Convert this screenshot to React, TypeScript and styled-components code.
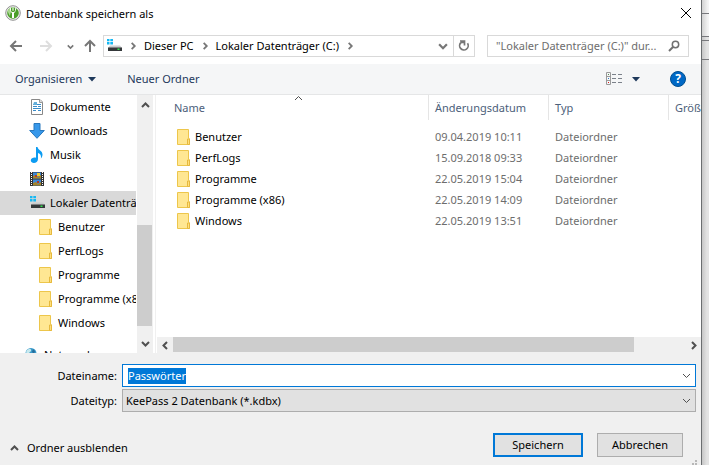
import React, { useEffect, useRef } from "react";
import styled, { createGlobalStyle } from "styled-components";

const GlobalStyle = createGlobalStyle`
  * { box-sizing: border-box; }
  body { margin: 0; background: #e3e3e3; }
  body, button, input, select { font: 11px/16px "Noto Sans", "Open Sans", sans-serif; color: #000; }
  svg { display: block; flex: none; }
`;

const Desktop = styled.div`
  display: flex;
  height: 100vh;
  min-height: 440px;
  overflow: hidden;
`;
const Dialog = styled.main`
  position: relative;
  flex: 1;
  min-width: 0;
  display: flex;
  flex-direction: column;
  background: #fff;
  border-right: 1px solid #6b6e70;
`;
const Backdrop = styled.div`
  width: 7px;
  display: flex;
  flex-direction: column;
  background: linear-gradient(90deg, #c6c6c6, #e3e3e3 5px);
`;
const BackdropStrip = styled.div<{ $height: number; $light?: boolean }>`
  height: ${(p) => p.$height}px;
  border-bottom: 1px solid #77787c;
  background: ${(p) => (p.$light ? "linear-gradient(90deg, #d2d2d2, #f4f4f4 6px)" : "transparent")};
`;
const TitleBar = styled.header`
  display: flex;
  align-items: center;
  height: 28px;
  padding: 0 7px 2px 5px;
  gap: 5px;
`;
const Title = styled.h1`
  flex: 1;
  margin: 0;
  padding-top: 2px;
  font-size: 11px;
  font-weight: 400;
`;
const IconButton = styled.button<{ $width?: number }>`
  display: flex;
  align-items: center;
  justify-content: center;
  width: ${(p) => p.$width ?? 16}px;
  height: 20px;
  padding: 0;
  border: 0;
  background: none;
  flex: none;
`;
const NavBar = styled.nav`
  display: flex;
  align-items: center;
  height: 36px;
  padding: 0 12px 0 8px;
`;
const History = styled.div`
  display: flex;
  align-items: center;
  width: 95px;
`;
const AddressBar = styled.div`
  flex: 1;
  min-width: 0;
  display: flex;
  align-items: center;
  height: 22px;
  border: 1px solid #d9d9d9;
  padding-left: 2px;
`;
const Crumb = styled.button`
  padding: 0;
  border: 0;
  background: none;
  white-space: nowrap;
`;
const CrumbChevron = styled.span`
  display: flex;
  justify-content: center;
  width: 22px;
`;
const Spacer = styled.span`
  flex: 1;
`;
const RefreshCell = styled.div`
  border-left: 1px solid #d9d9d9;
`;
const SearchBox = styled.label`
  display: flex;
  align-items: center;
  width: 202px;
  height: 22px;
  margin-left: 12px;
  padding: 0 8px;
  border: 1px solid #d9d9d9;
`;
const SearchInput = styled.input`
  flex: 1;
  min-width: 0;
  padding: 0;
  border: 0;
  outline: 0;
  background: none;
  text-overflow: ellipsis;
  &::placeholder { color: #6d6d6d; opacity: 1; }
`;
const Toolbar = styled.div`
  display: flex;
  align-items: center;
  height: 31px;
  padding: 0 15px;
  background: #f5f6f7;
  border-bottom: 1px solid #e5e6e7;
`;
const ToolButton = styled.button`
  display: flex;
  align-items: center;
  gap: 6px;
  margin-right: 31px;
  padding: 0;
  border: 0;
  background: none;
  color: #1e395b;
`;
const ViewButton = styled(ToolButton)`
  gap: 10px;
  margin-right: 30px;
`;
const Content = styled.div`
  flex: 1;
  min-height: 0;
  display: flex;
`;
const TreePane = styled.aside`
  width: 156px;
  display: flex;
  border-right: 1px solid #f0f0f0;
`;
const Tree = styled.ul`
  flex: 1;
  min-width: 0;
  margin: 0;
  padding: 0;
  list-style: none;
  overflow: hidden;
`;
const TreeItem = styled.li<{ $depth: number; $selected?: boolean; $spaced?: boolean }>`
  display: flex;
  align-items: center;
  gap: 5px;
  height: 24px;
  margin-top: ${(p) => (p.$spaced ? 8 : 0)}px;
  margin-right: 1px;
  padding-left: ${(p) => [23, 29, 37][p.$depth]}px;
  background: ${(p) => (p.$selected ? "#d9d9d9" : "transparent")};
  white-space: nowrap;
  overflow: hidden;
`;
const VerticalBar = styled.div`
  width: 16px;
  margin-right: 2px;
  display: flex;
  flex-direction: column;
  align-items: center;
  background: #f0f0f0;
`;
const VerticalTrack = styled.div`
  flex: 1;
  width: 100%;
  display: flex;
  flex-direction: column;
  justify-content: flex-end;
  padding: 0 1px 7px 0;
`;
const VerticalThumb = styled.div`
  height: 48%;
  background: #cdcdcd;
`;
const FilePane = styled.section`
  flex: 1;
  min-width: 0;
  display: flex;
  flex-direction: column;
`;
const TableArea = styled.div`
  flex: 1;
  min-height: 0;
  overflow: hidden;
`;
const FileTable = styled.table`
  width: 100%;
  table-layout: fixed;
  border-collapse: separate;
  border-spacing: 0;
  tbody::before { content: ""; display: block; height: 6px; }
`;
const HeadCell = styled.th<{ $width?: number; $first?: boolean }>`
  width: ${(p) => (p.$width ? `${p.$width}px` : "auto")};
  height: 25px;
  padding: 1px 0 0 ${(p) => (p.$first ? 18 : 6)}px;
  border-left: ${(p) => (p.$first ? "0" : "1px solid #e5e5e5")};
  color: #4c607a;
  font-weight: 400;
  text-align: left;
  white-space: nowrap;
`;
const HeadLabel = styled.span`
  display: flex;
  justify-content: space-between;
`;
const SortMark = styled.span`
  display: flex;
  align-items: flex-start;
  height: 28px;
  margin: -6px 125px -6px 0;
`;
const Cell = styled.td`
  height: 21px;
  padding: 0 0 0 7px;
  color: #6d6d6d;
`;
const NameCell = styled(Cell)`
  padding-left: 19px;
  color: #000;
`;
const FileName = styled.span`
  display: flex;
  align-items: center;
  gap: 4px;
`;
const HorizontalBar = styled.div`
  display: flex;
  align-items: center;
  height: 16px;
  margin-left: 1px;
  background: #f0f0f0;
`;
const HorizontalTrack = styled.div`
  flex: 1;
  height: 100%;
  padding-bottom: 1px;
`;
const HorizontalThumb = styled.div`
  width: 90%;
  height: 100%;
  background: #cdcdcd;
`;
const Footer = styled.form`
  display: flex;
  flex-direction: column;
  height: 112px;
  padding: 11px 5px 8px 8px;
  background: #f0f0f0;
`;
const Field = styled.div`
  display: flex;
  align-items: center;
  height: 23px;
  margin-bottom: 2px;
`;
const FieldLabel = styled.label`
  width: 114px;
  padding-right: 5px;
  text-align: right;
`;
const Combo = styled.div<{ $active?: boolean }>`
  flex: 1;
  height: 23px;
  display: grid;
  align-items: center;
  border: 1px solid ${(p) => (p.$active ? "#0078d7" : "#adadad")};
  background: ${(p) => (p.$active ? "#fff" : "#e1e1e1")};
  > * { grid-area: 1 / 1; }
  > svg { justify-self: end; margin-right: 4px; pointer-events: none; }
`;
const NameInput = styled.input`
  min-width: 0;
  height: 16px;
  padding: 0 24px 0 5px;
  border: 0;
  outline: 0;
  background: none;
  &::selection { background: #0078d7; color: #fff; }
`;
const TypeSelect = styled.select`
  appearance: none;
  min-width: 0;
  height: 21px;
  padding: 0 24px 0 3px;
  border: 0;
  outline: 0;
  background: none;
`;
const Actions = styled.div`
  display: flex;
  align-items: center;
  gap: 14px;
  margin-top: auto;
  padding-right: 13px;
`;
const FoldButton = styled.button`
  display: flex;
  align-items: center;
  gap: 8px;
  margin-right: auto;
  padding: 6px 0 0 2px;
  border: 0;
  background: none;
`;
const PushButton = styled.button<{ $primary?: boolean }>`
  width: ${(p) => (p.$primary ? 90 : 86)}px;
  height: 24px;
  padding: 0;
  border: ${(p) => (p.$primary ? "2px solid #0078d7" : "1px solid #adadad")};
  background: #e1e1e1;
`;
const ResizeGrip = styled.svg`
  position: absolute;
  right: 2px;
  bottom: 0;
`;

type Direction = "up" | "down" | "left" | "right";
const chevronPaths: Record<Direction, string> = {
  up: "M1 6 L4.5 2.5 L8 6",
  down: "M1 3 L4.5 6.5 L8 3",
  left: "M6 1 L2.5 4.5 L6 8",
  right: "M3 1 L6.5 4.5 L3 8",
};
const Chevron = ({ dir, size = 9, weight = 2, color = "#505050" }: { dir: Direction; size?: number; weight?: number; color?: string }) => (
  <svg width={size} height={size} viewBox="0 0 9 9" fill="none" stroke={color} strokeWidth={weight}>
    <path d={chevronPaths[dir]} />
  </svg>
);

const Arrow = ({ dir, color }: { dir: Direction; color: string }) => (
  <svg width="14" height="14" viewBox="0 0 14 14" fill="none" stroke={color} strokeWidth="2">
    <path
      d={
        dir === "left"
          ? "M13 7H2M7 2L2 7l5 5"
          : dir === "right"
            ? "M1 7h11M7 2l5 5-5 5"
            : "M7 13V2M2 7l5-5 5 5"
      }
    />
  </svg>
);

const KeePassIcon = () => (
  <svg width="16" height="16" viewBox="0 0 16 16">
    <circle cx="8" cy="8" r="7.3" fill="#eee" stroke="#929292" strokeWidth="1" />
    <circle cx="8" cy="8" r="5.8" fill="#4a9e28" />
    <path d="M2.5 6.2A5.8 5.8 0 0 1 6 2.6v4L4.8 11z" fill="#a9d68e" />
    <path d="M4.8 3.5l1 3.5 1.2 1V13h2V8l1.200-1 1-3.500L10 3v3.200L8.700 7H7.300L6 6.200V3z" fill="#fff" />
    <path d="M7.300 2.300h1.400v3.500H7.300z" fill="#d7edcb" />
  </svg>
);
const DriveIcon = () => (
  <svg width="16" height="16" viewBox="0 0 16 16">
    <path d="M1 1h2.500v2.300H1zM4.300 1H7v2.300H4.300zM1 4.100h2.500v2.400H1zM4.300 4.100H7v2.400H4.300z" fill="#16b8f3" />
    <path d="M4 7.500h10l2 2.500H2z" fill="#c9ccce" />
    <path d="M2 9.500h14V13H2z" fill="#34383a" />
    <path d="M11.500 10.500h2v1.500h-2z" fill="#31e34c" />
  </svg>
);
const FolderIcon = () => (
  <svg width="16" height="18" viewBox="0 0 16 18">
    <path d="M2.500 1.500h11v8.500l1 1v5.500h-12z" fill="#ffe793" stroke="#edc64b" />
    <path d="M12.500 16.500v-5.500h2v5.500z" fill="#ffdf7d" stroke="#e6b93e" />
  </svg>
);
const DocumentIcon = () => (
  <svg width="16" height="16" viewBox="0 0 16 16">
    <path d="M2.500.5h8.500l2.500 2.500v12.500h-11z" fill="#fff" stroke="#888" />
    <path d="M10.500.5v3h3" fill="#ddd" stroke="#999" />
    <path d="M4 5.500h3M8 5.500h4M4 7.500h4M9 7.500h3M4 9.500h8M4 11.500h3M9 11.500h3" stroke="#3a8cc9" />
    <path d="M5 3h3v3H4z" fill="#62add9" />
  </svg>
);
const DownloadIcon = () => (
  <svg width="16" height="16" viewBox="0 0 16 16">
    <path d="M5 .5h6v7h4.300L8 15.300.7 7.500H5z" fill="#3798ea" stroke="#2878be" />
  </svg>
);
const MusicIcon = () => (
  <svg width="16" height="16" viewBox="0 0 16 16">
    <path d="M7 0h1.500c.5 3 5 3.500 5 7.500 0 2-1 3.500-1.700 4 .8-3-.8-5-2.800-5.500V12c0 5-7.500 5-7.200 1.200C2 11 5 10 7 10.800z" fill="#0c9cf2" />
  </svg>
);
const VideoIcon = () => (
  <svg width="16" height="16" viewBox="0 0 16 16">
    <path d="M1 1h14v14H1z" fill="#333" />
    <path d="M4 1.500h8v6H4zM4 8.500h8v6H4z" fill="#3c88d8" />
    <path d="M4 5l3-1 2 2 3-2v3.500H4zM4 12l3-1 2 2 3-2v3.500H4z" fill="#a78529" />
    <path d="M8 2h3v3H8z" fill="#ebc936" />
    <path d="M6 4h2v2H6zM8 10h2v2H8z" fill="#b43b22" />
    <path d="M2.500 1v14M13.500 1v14" stroke="#fff" strokeWidth="1" strokeDasharray="1 1" />
  </svg>
);
const NetworkIcon = () => (
  <svg width="16" height="16" viewBox="0 0 16 16">
    <circle cx="8" cy="6.500" r="5.500" fill="#3a9bcb" />
    <path d="M4 3c2-2 5-1 4 1L6 6l1 3-3-2-1-2z" fill="#c7e9ee" />
    <path d="M10 2l2 2-1 3-2-2z" fill="#266d9b" />
  </svg>
);
const RefreshIcon = () => (
  <svg width="12" height="12" viewBox="0 0 12 12" fill="none" stroke="#767676" strokeWidth="1.700">
    <path d="M3 2.500A4.300 4.300 0 1 0 9.500 3.300M3 2.500H7M6.500 5.500V1H2" />
  </svg>
);
const SearchIcon = () => (
  <svg width="12" height="12" viewBox="0 0 12 12" fill="none" stroke="#707070">
    <circle cx="7.500" cy="4.500" r="3.200" strokeWidth="1.500" />
    <path d="M5 7L1 11" strokeWidth="2" />
  </svg>
);
const CloseIcon = () => (
  <svg width="12" height="12" viewBox="0 0 12 12" stroke="#000">
    <path d="M1 1l10 10M11 1L1 11" />
  </svg>
);
const Triangle = () => (
  <svg width="8" height="5" viewBox="0 0 8 5">
    <path d="M0 0h8L4 4.500z" fill="#1e395b" />
  </svg>
);
const ViewIcon = () => (
  <svg width="16" height="14" viewBox="0 0 16 14" fill="none">
    <path d="M.5.5h4v12h-4zM.5 4.500h4M.5 8.500h4" stroke="#9a9a9a" />
    <path d="M6 2.500h4M12 2.500h4M6 6.500h4M12 6.500h4M6 10.500h4M12 10.500h4" stroke="#7b818a" />
    <path d="M2 2h1v1H2z" fill="#508b50" />
    <path d="M2 6h1v1H2z" fill="#3179c8" />
    <path d="M2 10h1v1H2z" fill="#e01919" />
  </svg>
);
const HelpMark = styled.span`
  display: grid;
  place-items: center;
  width: 16px;
  height: 16px;
  border: 1px solid #004f91;
  border-radius: 50%;
  background: #0068c5;
  color: #fff;
  font-size: 12px;
  font-weight: 700;
  line-height: 14px;
`;

const treeItems = [
  { name: "Dokumente", icon: DocumentIcon, depth: 1 },
  { name: "Downloads", icon: DownloadIcon, depth: 1 },
  { name: "Musik", icon: MusicIcon, depth: 1 },
  { name: "Videos", icon: VideoIcon, depth: 1 },
  { name: "Lokaler Datenträger (C:)", icon: DriveIcon, depth: 1, selected: true },
  { name: "Benutzer", icon: FolderIcon, depth: 2 },
  { name: "PerfLogs", icon: FolderIcon, depth: 2 },
  { name: "Programme", icon: FolderIcon, depth: 2 },
  { name: "Programme (x86)", icon: FolderIcon, depth: 2 },
  { name: "Windows", icon: FolderIcon, depth: 2 },
  { name: "Netzwerk", icon: NetworkIcon, depth: 0, spaced: true },
];
const files = [
  ["Benutzer", "09.04.2019 10:11"],
  ["PerfLogs", "15.09.2018 09:33"],
  ["Programme", "22.05.2019 15:04"],
  ["Programme (x86)", "22.05.2019 14:09"],
  ["Windows", "22.05.2019 13:51"],
];

export default function App() {
  const nameRef = useRef<HTMLInputElement>(null);
  useEffect(() => {
    nameRef.current?.focus();
    nameRef.current?.select();
  }, []);

  return (
    <Desktop>
      <GlobalStyle />
      <Dialog>
        <TitleBar>
          <KeePassIcon />
          <Title>Datenbank speichern als</Title>
          <IconButton aria-label="Schließen"><CloseIcon /></IconButton>
        </TitleBar>
        <NavBar>
          <History>
            <IconButton aria-label="Zurück"><Arrow dir="left" color="#777" /></IconButton>
            <IconButton aria-label="Vorwärts" $width={44}><Arrow dir="right" color="#dedede" /></IconButton>
            <IconButton aria-label="Zuletzt besucht" $width={4}><Chevron dir="down" size={7} color="#777" /></IconButton>
            <IconButton aria-label="Nach oben" $width={36}><Arrow dir="up" color="#777" /></IconButton>
          </History>
          <AddressBar>
            <DriveIcon />
            <CrumbChevron><Chevron dir="right" size={8} color="#777" /></CrumbChevron>
            <Crumb>Dieser PC</Crumb>
            <CrumbChevron><Chevron dir="right" size={8} color="#777" /></CrumbChevron>
            <Crumb>Lokaler Datenträger (C:)</Crumb>
            <CrumbChevron><Chevron dir="right" size={8} color="#777" /></CrumbChevron>
            <Spacer />
            <IconButton aria-label="Verlauf" $width={20}><Chevron dir="down" size={10} color="#777" /></IconButton>
            <RefreshCell>
              <IconButton aria-label="Aktualisieren" $width={20}><RefreshIcon /></IconButton>
            </RefreshCell>
          </AddressBar>
          <SearchBox>
            <SearchInput aria-label="Suchen" placeholder={'"Lokaler Datenträger (C:)" dur...'} />
            <SearchIcon />
          </SearchBox>
        </NavBar>
        <Toolbar>
          <ToolButton>Organisieren <Triangle /></ToolButton>
          <ToolButton>Neuer Ordner</ToolButton>
          <Spacer />
          <ViewButton aria-label="Ansicht"><ViewIcon /><Triangle /></ViewButton>
          <IconButton aria-label="Hilfe"><HelpMark>?</HelpMark></IconButton>
        </Toolbar>
        <Content>
          <TreePane>
            <Tree>
              {treeItems.map(({ name, icon: Icon, depth, selected, spaced }) => (
                <TreeItem key={name} $depth={depth} $selected={selected} $spaced={spaced}>
                  <Icon />
                  {name}
                </TreeItem>
              ))}
            </Tree>
            <VerticalBar>
              <IconButton aria-label="Nach oben blättern"><Chevron dir="up" /></IconButton>
              <VerticalTrack><VerticalThumb /></VerticalTrack>
              <IconButton aria-label="Nach unten blättern"><Chevron dir="down" /></IconButton>
            </VerticalBar>
          </TreePane>
          <FilePane>
            <TableArea>
              <FileTable>
                <thead>
                  <tr>
                    <HeadCell $width={272} $first>
                      <HeadLabel>
                        Name
                        <SortMark><Chevron dir="up" weight={1} /></SortMark>
                      </HeadLabel>
                    </HeadCell>
                    <HeadCell $width={120}>Änderungsdatum</HeadCell>
                    <HeadCell $width={120}>Typ</HeadCell>
                    <HeadCell>Größe</HeadCell>
                  </tr>
                </thead>
                <tbody>
                  {files.map(([name, date]) => (
                    <tr key={name}>
                      <NameCell><FileName><FolderIcon />{name}</FileName></NameCell>
                      <Cell>{date}</Cell>
                      <Cell>Dateiordner</Cell>
                      <Cell />
                    </tr>
                  ))}
                </tbody>
              </FileTable>
            </TableArea>
            <HorizontalBar>
              <IconButton aria-label="Nach links blättern"><Chevron dir="left" /></IconButton>
              <HorizontalTrack><HorizontalThumb /></HorizontalTrack>
              <IconButton aria-label="Nach rechts blättern"><Chevron dir="right" /></IconButton>
            </HorizontalBar>
          </FilePane>
        </Content>
        <Footer onSubmit={(e) => e.preventDefault()}>
          <Field>
            <FieldLabel htmlFor="file-name">Dateiname:</FieldLabel>
            <Combo $active>
              <NameInput id="file-name" ref={nameRef} defaultValue="Passwörter" />
              <Chevron dir="down" weight={1} />
            </Combo>
          </Field>
          <Field>
            <FieldLabel htmlFor="file-type">Dateityp:</FieldLabel>
            <Combo>
              <TypeSelect id="file-type">
                <option>KeePass 2 Datenbank (*.kdbx)</option>
              </TypeSelect>
              <Chevron dir="down" weight={1} />
            </Combo>
          </Field>
          <Actions>
            <FoldButton type="button"><Chevron dir="up" />Ordner ausblenden</FoldButton>
            <PushButton type="submit" $primary>Speichern</PushButton>
            <PushButton type="button">Abbrechen</PushButton>
          </Actions>
        </Footer>
        <ResizeGrip width="8" height="5" viewBox="0 0 8 5" fill="#b8b8b8">
          <path d="M4 0h2v2H4zM1 3h2v2H1zM4 3h2v2H4z" />
        </ResizeGrip>
      </Dialog>
      <Backdrop>
        <BackdropStrip $height={14} $light />
        <BackdropStrip $height={23} $light />
        <BackdropStrip $height={4} />
        <BackdropStrip $height={19} />
      </Backdrop>
    </Desktop>
  );
}
